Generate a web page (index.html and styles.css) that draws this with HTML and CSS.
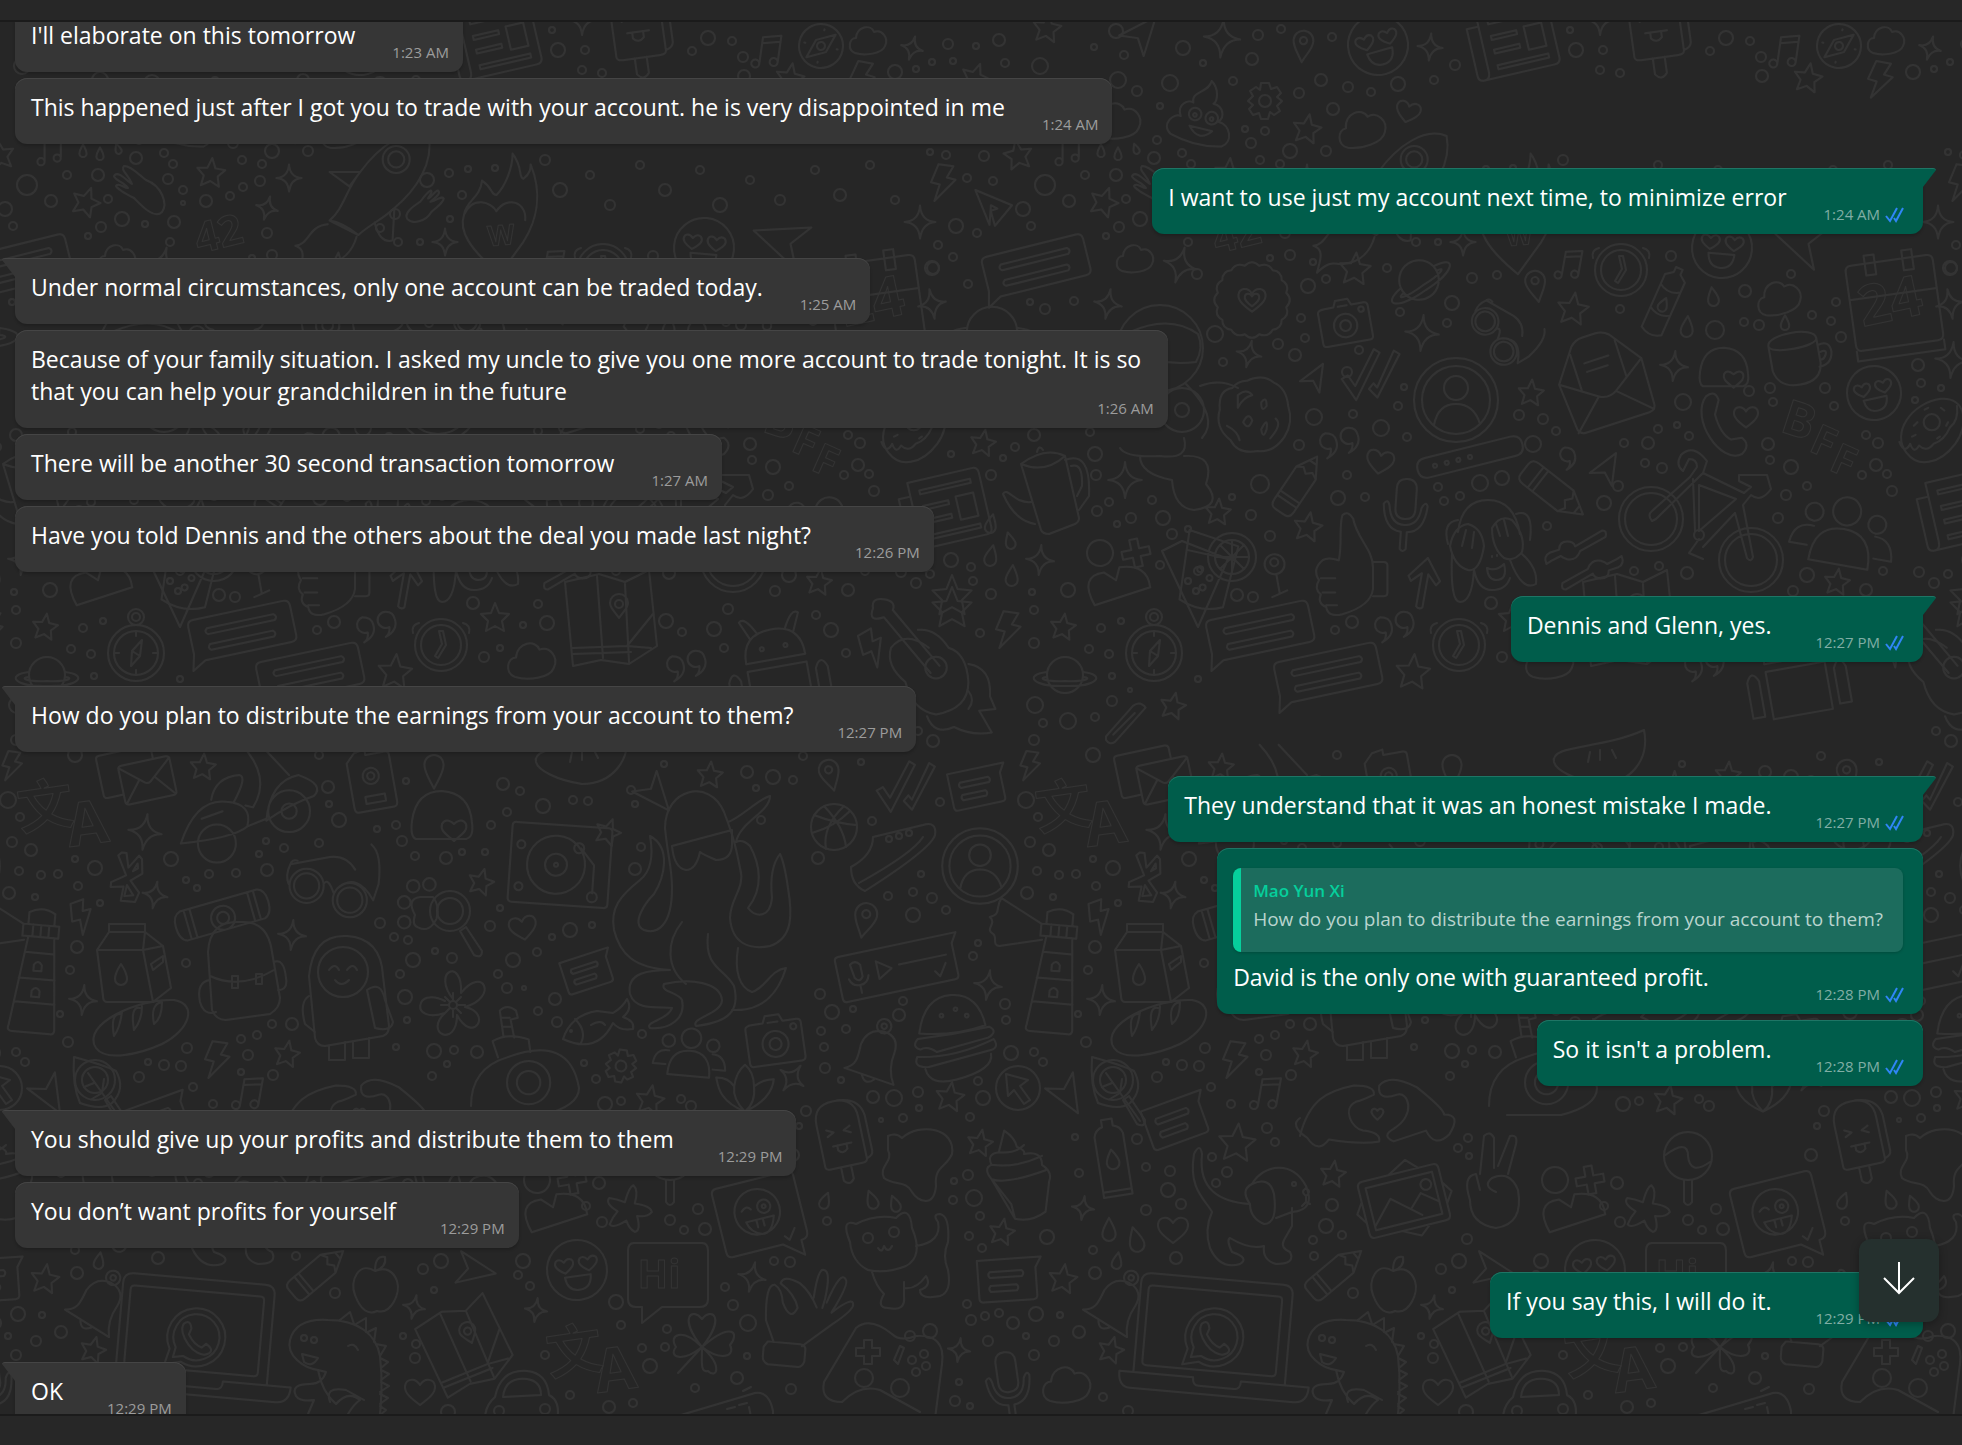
FILE: index.html
```html
<!DOCTYPE html>
<html lang="en">
<head>
    <meta charset="UTF-8">
    <meta name="viewport" content="width=device-width, initial-scale=1.0">
    <title>Chat</title>
    <link rel="stylesheet" href="styles.css">
</head>
<body>
    <svg class="sprite" aria-hidden="true">
        <symbol id="ticks" viewBox="0 0 20 16">
            <path d="M1 9l4 5L12 1M9 11l2 3L18 1" />
        </symbol>
    </svg>

    <header class="top-bar"></header>

    <main class="chat">
        <svg class="wallpaper" aria-hidden="true">
            <defs>
                <pattern id="tile" y="-22" width="1018" height="1445" patternUnits="userSpaceOnUse">
                    <g id="doodles"></g>
                    <use href="#doodles" x="1018" />
                    <use href="#doodles" x="-1018" />
                </pattern>
            </defs>
            <rect width="100%" height="100%" fill="url(#tile)" />
        </svg>

        <div class="messages">
            <div class="message in">
                <p class="text">I'll elaborate on this tomorrow</p>
                <span class="time short">1:23 AM</span>
            </div>
            <div class="message in">
                <p class="text">This happened just after I got you to trade with your account. he is very disappointed in me</p>
                <span class="time short">1:24 AM</span>
            </div>

            <div class="message out first">
                <p class="text">I want to use just my account next time, to minimize error</p>
                <span class="time short">1:24 AM <svg class="ticks"><use href="#ticks" /></svg></span>
            </div>

            <div class="message in first">
                <p class="text">Under normal circumstances, only one account can be traded today.</p>
                <span class="time short">1:25 AM</span>
            </div>
            <div class="message in">
                <p class="text">Because of your family situation. I asked my uncle to give you one more account to trade tonight. It is so<br>that you can help your grandchildren in the future</p>
                <span class="time under">1:26 AM</span>
            </div>
            <div class="message in">
                <p class="text">There will be another 30 second transaction tomorrow</p>
                <span class="time short">1:27 AM</span>
            </div>
            <div class="message in">
                <p class="text">Have you told Dennis and the others about the deal you made last night?</p>
                <span class="time">12:26 PM</span>
            </div>

            <div class="message out first">
                <p class="text">Dennis and Glenn, yes.</p>
                <span class="time">12:27 PM <svg class="ticks"><use href="#ticks" /></svg></span>
            </div>

            <div class="message in first">
                <p class="text">How do you plan to distribute the earnings from your account to them?</p>
                <span class="time">12:27 PM</span>
            </div>

            <div class="message out first">
                <p class="text">They understand that it was an honest mistake I made.</p>
                <span class="time">12:27 PM <svg class="ticks"><use href="#ticks" /></svg></span>
            </div>
            <div class="message out with-quote">
                <blockquote class="quote">
                    <cite class="quote-name">Mao Yun Xi</cite>
                    <p class="quote-text">How do you plan to distribute the earnings from your account to them?</p>
                </blockquote>
                <p class="text">David is the only one with guaranteed profit.</p>
                <span class="time">12:28 PM <svg class="ticks"><use href="#ticks" /></svg></span>
            </div>
            <div class="message out">
                <p class="text">So it isn't a problem.</p>
                <span class="time">12:28 PM <svg class="ticks"><use href="#ticks" /></svg></span>
            </div>

            <div class="message in first">
                <p class="text">You should give up your profits and distribute them to them</p>
                <span class="time">12:29 PM</span>
            </div>
            <div class="message in">
                <p class="text">You don’t want profits for yourself</p>
                <span class="time">12:29 PM</span>
            </div>

            <div class="message out turn">
                <p class="text">If you say this, I will do it.</p>
                <span class="time">12:29 PM <svg class="ticks"><use href="#ticks" /></svg></span>
            </div>

            <div class="message in first">
                <p class="text">OK</p>
                <span class="time">12:29 PM</span>
            </div>
        </div>

        <button type="button" class="scroll-down" aria-label="Scroll to latest">
            <svg viewBox="0 0 32 34"><path d="M16 1v31M1 17l15 15 15-15" /></svg>
        </button>
    </main>

    <footer class="bottom-bar"></footer>

    <script src="wallpaper.js"></script>
</body>
</html>
```

FILE: styles.css
```css
* {
    box-sizing: border-box;
}

body {
    display: flex;
    flex-direction: column;
    height: 100vh;
    margin: 0;
    background-color: #272727;
    color: #fff;
    font-family: "Open Sans", "Noto Sans", sans-serif;
    font-size: 23px;
    line-height: 32px;
}

p {
    margin: 0;
}

.sprite {
    position: absolute;
    width: 0;
    height: 0;
}

.top-bar {
    height: 22px;
    flex-shrink: 0;
    border-bottom: 2px solid #1b1b1b;
}

.bottom-bar {
    height: 31px;
    flex-shrink: 0;
    border-top: 2px solid #1b1b1b;
}

/* Chat area */
.chat {
    position: relative;
    flex: 1;
    min-height: 0;
    overflow: hidden;
    background-color: #262626;
}

.wallpaper {
    position: absolute;
    inset: 0;
    width: 100%;
    height: 100%;
}

#doodles {
    fill: none;
    stroke: #333;
    stroke-width: 2;
    stroke-linecap: round;
    stroke-linejoin: round;
}

#doodles text {
    font-family: "Open Sans", "Noto Sans CJK SC", sans-serif;
    font-weight: bold;
    stroke-width: 1;
    text-anchor: middle;
}

/* Scrolled a little, so the first bubble is cut off */
.messages {
    position: relative;
    display: flex;
    flex-direction: column;
    gap: 6px;
    margin-top: -16px;
    padding: 0 39px 0 15px;
}

.message {
    position: relative;
    display: flex;
    align-items: flex-end;
    max-width: 1160px;
    padding: 13px 14px 10px 16px;
    border-radius: 12px;
}

.in {
    align-self: flex-start;
    background-color: #363636;
    box-shadow: inset 0 1px #454545, 0 2px 3px rgba(0, 0, 0, 0.2);
}

.out {
    align-self: flex-end;
    padding-right: 18px;
    background-color: #005d4b;
    box-shadow: inset 0 1px #1f7565, 0 2px 3px rgba(0, 0, 0, 0.2);
}

.first,
.turn {
    margin-top: 18px;
}

.in.first {
    border-top-left-radius: 0;
}

.out.first {
    border-top-right-radius: 0;
}

/* Bubble tails */
.first::before {
    content: "";
    position: absolute;
    top: 0;
    width: 13px;
    height: 18px;
    background-color: inherit;
}

.in.first::before {
    right: 100%;
    border-top: 1px solid #454545;
    border-top-left-radius: 3px;
    clip-path: polygon(0 0, 100% 0, 100% 100%, 0 2px);
}

.out.first::before {
    left: 100%;
    border-top: 1px solid #1f7565;
    border-top-right-radius: 3px;
    clip-path: polygon(0 0, 100% 0, 100% 2px, 0 100%);
}

.text {
    flex-shrink: 0;
    padding-bottom: 11px;
}

.time {
    flex-shrink: 0;
    margin-left: 44px;
    color: #9c9c9c;
    font-size: 15px;
    line-height: 20px;
    white-space: nowrap;
}

.time.short {
    margin-left: 37px;
}

/* The time sits below the end of the longest line */
.time.under {
    margin-left: -44px;
}

.out .time {
    color: #80aea5;
}

.ticks {
    width: 20px;
    height: 16px;
    margin-left: 1px;
    vertical-align: -3px;
    fill: none;
    stroke: #2f86f6;
    stroke-width: 2;
}

/* Quoted message */
.with-quote {
    flex-wrap: wrap;
    justify-content: space-between;
    width: min-content;
    padding-top: 20px;
}

.quote {
    margin: 0 2px 9px 0;
    padding: 10px 20px 18px 12px;
    border-left: 8px solid #06cf9c;
    border-radius: 8px;
    background-color: #1c6c5d;
    box-shadow: 0 1px 3px rgba(0, 0, 0, 0.2);
    white-space: nowrap;
}

.quote-name {
    display: block;
    color: #06cf9c;
    font-size: 17px;
    font-style: normal;
    font-weight: 600;
    line-height: 26px;
}

.quote-text {
    color: #b9d4ce;
    font-size: 19px;
    line-height: 30px;
}

.scroll-down {
    position: absolute;
    right: 23px;
    bottom: 92px;
    display: flex;
    align-items: center;
    justify-content: center;
    width: 80px;
    height: 83px;
    padding: 0 0 6px;
    border: none;
    border-radius: 12px;
    background-color: #25302e;
    box-shadow: 0 2px 8px rgba(0, 0, 0, 0.3);
}

.scroll-down svg {
    width: 32px;
    height: 34px;
    fill: none;
    stroke: #fff;
    stroke-width: 2;
}
```

FILE: wallpaper.js
```js
// Circle as a path, so that every doodle is a single path
function c(x, y, r) {
    return "M" + (x - r) + " " + y + "a" + r + " " + r + " 0 1 0 " + 2 * r + " 0a" + r + " " + r + " 0 1 0 " + -2 * r + " 0z";
}

var heart = "M0 13C-8 7-16 1-15-6C-14-13-5-15 0-7C5-15 14-13 15-6C16 1 8 7 0 13z";
var smallHeart = "M0 7C-5 3-9 0-8-4C-7-8-2-8 0-4C2-8 7-8 8-4C9 0 5 3 0 7z";

// Every shape is drawn round 0,0
var shapes = {
    star: "M0-15L4-5L14-4L7 3L9 13L0 8L-9 13L-7 3L-14-4L-4-5z",
    sparkle: "M0-15Q1-1 14 0Q2 1 0 15Q-1 1-14 0Q-1-1 0-15z",
    heart: heart,
    drop: "M0-11C3-5 6-1 6 4A6 6 0 0 1-6 4C-6-1-3-5 0-11z",
    bolt: "M-7-18L8-18L3-6L12-5L-6 19L-3 2L-12 1z",
    cloud: "M-14 13C-22 10-20-2-13-2C-12-14 2-16 5-8C13-11 20-2 16 6C13 14-4 16-14 13z",
    pin: "M0 18C-5 8-11 2-11-6A11 11 0 0 1 11-6C11 2 5 8 0 18z" + c(0, -6, 4),
    notes: "M-6 12V-14L12-18V8M-6-8L12-12" + c(-10, 13, 4) + c(8, 9, 4),
    send: "M-18-16L20 0L-18 16L-8 0z",
    plane: "M-20-14L24-12L14 16L4 2L10-3L2-4L8 17z",
    plus: "M-4-14H4V-4H14V4H4V14H-4V4H-14V-4H-4z",
    bluetooth: "M-8-30L-2-30L2-12L14-28L18-24L20-6L6 4L18 18L14 30L-4 30L-2 12L-18 14L-18 8L0-2L-12-26zM8-8L14-12L13-18zM2 10L0 24L11 22z",
    clock: c(0, 0, 26) + c(0, 0, 20) + "M-2-14L1-1L-6 11L-3 13L5 0L2-14zM-22-22Q-30-20-28-12M22-22Q30-20 28-12",
    compass: c(0, 0, 28) + c(0, 0, 22) + c(0, -36, 8) + c(0, -36, 4) + "M-5 13L-4-2L6-13L4 3zM-4-2L4 3M0-22V-17M0 22V17M-22 0H-17M22 0H17",
    dial: c(0, 0, 22) + c(0, 0, 4) + "M-12 14L-6-5L12-14L6 5zM0-17V-16M0 17V16M-17 0H-16M17 0H16",
    planet: c(0, 0, 18) + "M-18-3C-42 0-32 12 0 11C32 12 42 0 18-3M-18 2C-28 3-20 7 0 6C20 7 28 3 18 2",
    camera: "M-20-18H-10L-7-25H7L10-18H24Q28-18 28-14V20Q28 24 24 24H-24Q-28 24-28 20V-14Q-28-18-20-18z" + c(0, 4, 13) + c(0, 4, 6) + c(20, -11, 3) + "M-5-18H5",
    badge: "M-8-38Q0-46 8-38Q18-42 23-33Q33-32 33-22Q42-17 38-8Q46 0 38 8Q42 17 33 22Q33 32 23 33Q18 42 8 38Q0 46-8 38Q-18 42-23 33Q-33 32-33 22Q-42 17-38 8Q-46 0-38-8Q-42-17-33-22Q-33-32-23-33Q-18-42-8-38z" + heart + smallHeart,
    chat: "M-46-20H46Q52-20 52-14V16Q52 22 46 22H-42L-56 30L-52 14V-14Q-52-20-46-20zM-34-9H34Q38-6 34-3H-34Q-38-6-34-9zM-34 7H30Q34 10 30 13H-34Q-38 10-34 7z",
    note: "M-28-18H36L30-8V20Q30 24 26 24H-24Q-28 24-28 20zM-16-6H16Q19-3 16 0H-16Q-19-3-16-6zM-16 8H10Q13 11 10 14H-16Q-19 11-16 8z",
    ticks: "M-28 6L-22 2L-14 12L2-26L8-23L-12 26zM0 14L4 8L8 12L22-26L28-23L9 22z",
    quotes: "M-14-12A9 9 0 1 0-8 5Q-7 12-12 16Q2 8-2-4Q-4-12-14-12zM12-18A9 9 0 1 0 16-1Q17 6 12 10Q26 2 22-10Q20-18 12-18z",
    quote: "M0-12A9 9 0 1 0 6 5Q7 12 2 16Q16 8 12-4Q10-12 0-12z",
    newspaper: "M-36-34H30Q36-34 36-28V28Q36 34 30 34H-42Q-48 34-48 28V-20H-36M-36-34V26Q-36 34-42 34M-26-24H26V-20H-26zM-26-8H0V-4H-26zM-26 6H0V10H-26zM8-10H26V14H8zM-26 22H26V26H-26z",
    popsicle: "M-24 30V-20Q-24-44 0-44Q26-44 26-20V30Q26 34 20 34H-18Q-24 34-24 30zM26 30Q34 28 34 22V-20Q32-42 6-44M-6 34V50Q0 58 6 50V34M-14-12L-6-8L-14-4M14-12L6-8L14-4M-10 8H12M-5 8V14Q0 20 6 14V8",
    poop: "M-30 28C-44 20-32 4-24 6C-32-6-20-14-14-12C-20-24 0-26 0-40C10-34 12-20 8-16C20-16 24-4 18 2C32 2 40 20 28 28Q0 36-30 28zM-12 14H14Q2 30-12 14z" + c(-9, 0, 7) + c(10, 0, 7) + c(-9, 1, 2) + c(10, 1, 2),
    gear: "M-4-18H4L6-12L12-14L16-8L12-4L17 0L12 5L15 10L9 14L5 11L3 18H-4L-6 12L-12 14L-16 8L-12 4L-17 0L-12-5L-15-10L-9-14L-5-11z" + c(0, 0, 6),
    smiley: c(0, 0, 30) + "M-13 6H13Q12 20 0 20Q-12 20-13 6zM-12 2C-20-3-23-7-20-11Q-16-14-12-9Q-8-14-4-11C-1-7-4-3-12 2zM12 2C4-3 1-7 4-11Q8-14 12-9Q16-14 20-11C23-7 20-3 12 2z",
    glove: "M-28-14C-24-20-16-10-10-6C-14-16-22-20-18-24C-10-24-2-14 4-10C20-4 26 14 20 22C12 30-2 14-8 8C-16 4-24 0-26-4C-24-8-18-2-14-2C-18-8-28-10-28-14z",
    rocket: "M-36 34C-20 20-18 0-2-20C20-50 50-70 74-60C80-30 60 0 36 20C24 32 6 40-4 50zM-36 34Q-22 36-4 50M-2-20H-36L-14-4zM36 20L34 56Q20 60 14 36M-38 38C-60 40-58 60-74 62C-60 66-68 82-70 92C-54 76-50 84-40 82C-20 80-10 66-6 52" + c(38, -34, 15) + c(38, -34, 9),
    flame: "M0 58C-34 30-46 10-40-8C-38-24-22-26-20-46C-8-38-10-30-4-30C6-40 14-60 14-76C26-60 20-50 26-48C34-54 34-60 34-64C48-30 40 0 26 22L0 58zM-40-8C-30-30-10-22-4-12C8-30 30-22 28-2",
    crayon: "M-12-30L-4-36V-42H4V-36L12-30V34Q0 42-12 34zM-12-18Q0-10 12-18M-12 10Q0 18 12 10M0-6C3-1 5 2 5 5A5 5 0 0 1-5 5C-5 2-3-1 0-6z",
    pencil: "M0-38L13-16V28Q13 36 6 36H-6Q-13 36-13 28V-16zM-13-16L-6-20L0-15L6-20L13-16M-13 16H13M-13 22H13M-4-30H4",
    calendar: "M-38-40H38Q44-40 44-34V40Q44 46 38 46H-38Q-44 46-44 40V-34Q-44-40-38-40zM-44 46V56H44V46M-24-48H-14V-28H-24zM14-48H24V-28H14zM-44-6H44",
    mug: "M-28-18C-28-32 26-32 26-18C26-8-28-8-28-18V10Q-24 30 0 30Q24 30 26 10V-18M26-10Q40-14 40 0Q38 14 24 14M28-2Q36-4 33 2Q30 8 26 6",
    glasses: "M-44-22L0-30Q18-32 28-16M-44-22Q-50-10-46 0M46-44Q58-34 54 0L48 18" + c(-26, 2, 19) + c(-26, 2, 14) + c(22, 18, 19) + c(22, 18, 14) + "M-7 0Q-2-8 4 10M-44-22Q-42-28-36-26M8 5Q30-14 48 18",
    envelopeOpen: "M-48-10L-44 44Q-42 50-36 50H38Q46 50 46 42L48-10L22-46Q16-52 8-52H-8Q-16-52-22-46zM-48-10L-10 16Q0 22 10 16L48-10M-44 48L-10 16M44 48L10 16M-26 4V-38M26 4V-38M-14-24H14M-14-14H10",
    envelopes: "M-38-30H16Q20-30 20-26V-14M-38-30Q-42-30-42-26V14Q-42 18-38 18H-20M-16-14H34Q38-14 38-10V26Q38 30 34 30H-16Q-20 30-20 26V-10Q-20-14-16-14zM-20-12L6 10Q9 12 12 10L38-12M-18 28L0 6M36 28L18 6",
    avatar: c(0, 0, 42) + c(0, 0, 34) + "M-22 25Q-18 4 0 4Q18 4 24 24" + c(0, -12, 12),
    helmet: "M-26 24Q-32 22-30 6Q-26-24 0-24Q28-22 30 8Q32 22 24 24zM12 26C4 19-2 16 0 9Q4 2 12 9Q20 2 24 9C26 16 20 19 12 26z",
    phone: "M-20-34Q-10-42-6-30L-10-14Q-4 8 8 14L20 12Q30 20 20 30C-4 42-38-10-20-34z",
    donut: "M-26 22C-44 0-20-34 12-38C40-40 44-10 28 12C10 36-14 38-26 22zM-34 10Q-28 24-22 12Q-18 24-12 14Q-4 22 4 12Q16 8 22-6Q32-14 30-30" + c(2, -12, 9) + "M-18-8L-14-12M-20 4L-16 2M-6-26L-2-28M12-28L16-25M18-8L20-12M8 6L11 4",
    cookie: "M-8-38Q10-46 22-36Q36-30 38-10Q44 8 34 24Q22 42 4 40Q-18 44-26 28Q-44 14-38-6Q-40-28-24-30Q-18-38-8-38zM-18-22Q-8-30-2-22Q-12-20-18-8zM8-14Q14-22 14-10Q8-2 8-14zM-12 8Q-6-4-2 6Q-6 18-12 8zM8 16Q16 0 14 16Q10 28 8 16zM24 4Q32 10 18 26M-30 12Q-18 18-16 28" ,
    pill: "M-44-10H44Q54-10 54 0Q54 10 44 10H-44Q-54 10-54 0Q-54-10-44-10z" + c(-36, 0, 2) + c(-24, 0, 2) + c(-12, 0, 2) + c(0, 0, 2),
    mic: "M0-36Q10-36 10-26V-6Q10 4 0 4Q-10 4-10-6V-26Q-10-36 0-36zM-22-10Q-18-16-16-8Q-14 10 0 10Q14 10 16-8Q20-16 22-10Q20 16 3 17V34Q0 38-3 34V17Q-20 16-22-10z",
    monkey: "M-30-16Q-26-48 0-48Q26-48 32-14M-30-28Q-46-26-40-4M28-34Q46-40 42-8M-38-2Q-34-22-20-24Q-6-20-4-2Q-8 24-20 22Q-34 18-38-2zM-26-2L-22-18M-16 0L-14-16M4-20Q12-34 24-28Q38-12 34 4Q26 14 16 10Q4 0 4-20zM12-12L8-24M20-12L16-28M-14 22Q-10 42 4 42Q18 42 22 30M-1 20Q8 24 16 16Q20 32 8 32Q0 32-1 20zM-36 6Q-38 54-28 54Q-16 54-14 22M34 6Q50 20 48 36Q34 44 22 12M4 8V9M9 7V8",
    bike: c(-50, 6, 32) + c(-50, 6, 26) + c(50, 47, 32) + c(50, 47, 26) + "M-49 8Q-54 2-49-2L-11-36L-4-46Q-4-54-12-54L-18-42Q-26-48-20-58Q-8-70 6-52L2-40L-45 6zM2-40L43-20L50-26L38-32V-38H66L70-24Q60-10 50-18L42-8L52 44Q50 50 46 45L34 0L2 34M-2-28L35-14L-2 18zM-8-34L-6 18M-2 26L-12 40L2 46" + c(-2, 22, 5),
    thumb: "M-8-2C-4-20-8-40-4-52Q2-58 8-48C12-26 30-14 30 6V30C28 46 10 54-4 58Q-20 62-22 50Q-32 46-28 36Q-36 30-30 20Q-38 8-26-2Q-20-6-8-2zM-28 18H-12M-26 34H-12M-22 48H-10M30 0H42Q46 0 46 4V34Q46 38 42 38H30",
    goblet: c(0, -14, 10) + c(0, -16, 4) + "M0-4V16M-8 18L8 14",
    arrow: "M-4 34V-8L-16 4L-20-2L0-28L20-2L16 4L4-8V34Q0 38-4 34z",
    wrench: "M-42 20Q-46 10-38 6L-26 2Q-26-8-16-8Q-8-8-6-2L28-22Q34-22 32-14L0 4Q-4 16-16 14Q-22 12-24 10L-36 16z",
    people: c(0, -24, 14) + c(-32, -18, 9) + c(32, -16, 9) + "M-30 30Q-30-6 0-6Q30-6 30 30zM-34 16H-52Q-50-6-30-4M34 18H52Q50-4 32-4",
    lemon: c(0, 0, 24) + c(0, 0, 17) + "M0-17V17M-17 0H17M-12-12L12 12M12-12L-12 12M-50-16L-4 2L-34 70L-70-6z" + c(-34, 14, 4) + c(-44, 24, 3) + c(-36, 34, 3),
    glass: "M-24-40L26-28L16 34Q-6 42-28 30zM-25-20L22-14" + c(-10, -2, 3) + c(0, 6, 3) + c(-6, 16, 3),
    teapot: "M-24-26Q0-44 20-34L34 28Q34 32 30 34L4 44Q-2 44-4 40zM-24-26Q0-16 20-34M-8-38Q-6-46-2-40M-14 12C-30 14-38-4-42 4C-34 22-24 32-10 34M20-30Q46-40 44 6L34 20M26-24Q38-28 37-4L32 6",
    astronaut: c(0, 0, 43) + "M-30-16Q10-34 38-14Q44 0 36 14Q0 18-30 4zM26 36Q60 70 42 90M40 38Q60 30 78 40M-40 100Q-34 110 0 108Q30 112 24 90M-20 108Q-20 126 12 132Q14 160 34 162Q64 158 46 136Q56 106 24 108" + c(22, 62, 22) + c(22, 62, 7),
    pear: c(0, 0, 13) + "M-16 50Q-26 18 0 20L10 30L16 18Q44 20 42 44z",
    map: "M-42-40L-8-48L18-40L42-52L50 24L22 42L-6 38L-34 44zM-34 26L20 24L46-8M-34 32L24 30M20 24L44 26M-10-46L-4 36M18-38L22 40" + c(12, -18, 4) + "M12-4C8-10 3-14 3-19A9 9 0 0 1 21-19C21-14 16-10 12-4z",
    android: "M-30 4Q-30-26 0-26Q30-26 30 4zM-22-20L-30-38Q-24-44-14-24M22-20L30-38Q24-44 14-24M-30 12H30V60H-30zM-50 20Q-44 6-38 20V56H-50zM38 20Q44 6 50 20V56H38z" + c(-12, -8, 2) + c(12, -8, 2),
    guitar: "M-8-8Q-34-28-50-8Q-56 12-34 30Q-26 62 0 66Q36 60 36 30Q34-2 14-8Q0-30-20-28M-6 20L-58-42M4 12L-48-50M-58-42Q-76-36-70-52Q-72-64-58-62Q-44-60-48-50M36 10Q62 14 60 46L66 60L48 62L62 86Q40 90 20 80Q-2 90-10 68M36 40Q44 50 36 60" + c(0, 14, 12),
    clip: "M-20 16L10-18Q18-24 24-16L-10 22Q-16 26-20 20zM-12 14L12-10",
    scooter: "M-56 30Q-40-18-8-14Q20-12 14 12Q0 24-56 30zM-24-16Q-20-40 6-42Q14-40 0-14M8-74Q40-40 20-8L12-10M28-74L58-42M14 12L34 4M34 6Q38-36 68-42Q96-32 84-20Q60-12 34 6z" + c(-18, 30, 20) + c(58, -4, 22) + c(58, -4, 8) + "M-34 4L-12-4",
    card: "M-20-30L-14-36L-2-38V-32H20Q24-32 24-28V24Q24 30 20 30H-20Q-24 30-24 24V-26zM-10 14H12V22H-10z" + c(0, -8, 9) + c(0, -8, 4),
    bean: "M-46-8C-50-26 0-20 44-40C50-10 30 14 0 14C-26 10-44 0-46-8zM-10-18L-12-8M0-20V-10M12-20L16-12",
    paw: "M-10 10Q-20-8-4-10H10Q18 0 14 14Q6 30-6 24Q-14 22-10 10z" + c(-22, -4, 7) + c(-12, -22, 7) + c(6, -24, 7) + c(-22, 18, 7),
    magnifier: c(0, -6, 20) + c(0, -6, 13) + "M10 14L16 10L32 34Q32 42 24 38z",
    recorder: "M-46-40H46Q50-40 50-36V36Q50 40 46 40H-46Q-50 40-50 36V-36Q-50-40-46-40zM20-18L34-2V26" + c(-4, 0, 29) + c(-4, 0, 11) + c(-4, 0, 2) + c(18, -18, 5) + c(34, 30, 5) + c(-40, 24, 4) + c(-40, -18, 4),
    cylinder: "M-40-14H40Q48-12 48 0Q48 14 40 16H-40Q-48 14-48 0Q-48-12-40-14zM-36-14V16M-30-14V16M30-14V16M36-14V16" + c(0, 4, 12) + c(0, 4, 6),
    lighthouse: "M-12-38H14L22 54Q22 58 18 58H-20Q-26 58-24 52zM-18-50H18V-38H-18zM-13-50V-62Q0-70 13-62V-50M-8-50V-38M0-50V-38M8-50V-38M-14-22H15M-18 4H18M-20 28H20M-4-4V-10Q0-16 4-10V-4zM-4 22V16Q0 10 4 16V22zM-18-50L-60-72C-66-62-58-56-70-52C-62-46-74-40-66-36C-60-34-66-24-58-24L-16-34",
    milk: "M-36-10L-24-28H12L30-14L38 28L20 42H-26Q-30 42-30 36zM-36-10H10L30-14M10-10L20 42M12-28L10-10M-24-28V-36H12V-28M-12 4C-8 10-6 14-6 19A6 6 0 0 1-18 19C-18 14-16 10-12 4zM18 4L30-4V2L20 10z",
    backpack: "M-32-20Q-30-52 0-50Q28-52 32-20L40 26Q40 36 30 42L-14 48Q-24 48-28 38zM-30 4Q0 18 34-2M-8 4V16H-2V4zM16 2V12H22V2zM-30 8Q-44 10-40 30Q-36 44-24 40M34-10Q44-14 46 6Q48 18 38 18",
    suit: "M-38-20Q-34-62 0-60Q34-58 36-20L42 30Q42 38 36 40L-22 50Q-30 50-32 42zM-18 50V64H-2V46M6 46V62H22V42M-38 0Q-48 6-42 28L-32 36M20-6Q34-16 38 4L46 26Q44 36 28 32z" + c(-4, -24, 25) + "M-18-26Q-12-34-8-26M0-26Q6-34 10-26M-12-16Q-6-8 2-16",
    flower: "M0-6C-22-34 10-48 8-12C30-40 46-8 12 2C40 8 20 40 4 10C4 44-30 28-8 8C-44 20-38-20-8-4" + c(0, 0, 4) + "M0-5V-12M5 0H12M0 5V12M-5 0H-12M4-4L8-8M-4-4L-8-8M4 4L8 8M-4 4L-8 8",
    bread: "M-44 20C-60-4 0-30 34-28C58-24 50 2 22 16C0 26-34 34-44 20zM-26 8Q-30-14-20-14M-26 8Q-20 0-18-16M-6 2Q-10-22 0-20M-6 2Q2-8 2-22M14-4Q10-24 22-26M14-4Q22-10 22-26",
    fish: "M-34 14Q-26-10 0-14L16-12Q26-18 30-26Q36-16 26-8Q38-4 36 4Q22 6 16-2Q0 30-34 14zM-22-6Q-10 6-16 18M-6 0Q4-6 8 0" + c(-26, 6, 1),
    leaf: "M-24-28Q6-20 18-14Q28 4 14 18Q4 26-18 18Q-26 0-24-28zM-10-12L24 36M-4-2L-14 2M4 8L-6 14M4 8L6-6",
    rotary: "M-60 40Q-60-2-20-14Q50-40 60 20Q60 40 20 50H-40M-30-14L-36-32Q-20-42 4-34L6-20M-24-38L-28-66Q-20-74-10-66L-8-58L-16-56L-12-36M-26-58H-17M-25-48H-16" + c(4, 14, 24) + c(4, 14, 13),
    octopus: "M-45-60C-45-100 0-110 14-76C24-50 26-40 30-20C36 0 20 10 20 30C22 56 40 62 60 58C84 50 82 24 78 0C76-14 74-26 70-34C62-24 60-10 62 10C60 30 46 30 38 20C54 0 50-24 40-42C34-48 30-48 26-46C30-66 60-76 60-92C50-90 30-70 18-66M-45-60C-42-30-38-20-38 0C-38 40-54 46-66 42C-80 36-64 14-56 6C-46-10-38-40-60-52C-56-30-60-16-70-8C-90 8-100 20-96 42C-90 66-76 80-40 82C-60 82-84 84-80 106C-74 124-50 118-38 120C-42 132-66 134-60 140C-40 142-24 130-28 112C-32 104-50 104-46 96C-20 90 10 94 12 112C12 126-20 130-14 138C20 134 30 122 24 98C14 80-6 80-2 46M-28 34C-44 54-44 80-24 96M28 60C24 84 30 100 42 104C56 100 60 82 76 80C70 100 56 124 22 122M-38-42L22-58V-44Q22-28 6-28Q-8-34-10-36Q-14-18-24-18Q-36-20-38-42z",
    ball: c(0, 0, 23) + "M-20-12Q0-4 22-2M-22 6Q0 0 16-16M-10-21Q10 0 12 20M10-21Q-12 0-8 22",
    shoe: "M-42 10Q-20-2-20-20L30-32Q44-36 42-22Q38-8-28 34Q-42 28-42 10zM-34 26Q20-4 30-20" + c(-4, -18, 3) + c(6, -21, 3) + c(16, -24, 3),
    voice: "M-56-20H64L58-10V22Q58 26 54 26H-56Q-60 26-60 22V-16Q-60-20-56-20zM-46-10Q-40-14-36-8V4Q-40 10-44 4zM-50 4Q-48 12-40 12Q-32 12-30 4M-40 12V20M-20-8L-6 2L-20 10zM2 0H50M36 14L40 20L48 8",
    burger: "M-38-10Q-30-50 0-50Q30-50 36-14Q0-4-38-10zM-40-4Q0-6 40-12Q50-6 38 0L-20 12Q-30 4-38 8Q-48 4-40-4zM-42 16Q0 20 44 2Q50 12 40 14L-30 28Q-48 28-42 16zM-34 30Q-30 50 0 44Q42 36 40 18" + c(-12, -28, 2) + c(4, -34, 2) + c(16, -26, 2),
    bell: "M-34 14C-20 10-20 0-18-14Q-12-32 6-30Q24-26 20-8Q14 12 22 28zM-14 20Q-10 32 0 24" + c(6, -36, 8) + c(6, -36, 3),
    lotus: "M0 24C-30 12-30-6-32-14Q-18-14-12-4Q-10-20 0-28Q10-20 10-4Q20-12 32-12Q30 10 0 24zM-12-4Q-14 10 0 24M10-4Q12 14 0 24",
    pointer: c(0, 0, 22) + "M-12-14L10-8L2-2L12 12L6 16L-4 2L-10 8z",
    blob: "M-32-26Q-24-30-18-24C0-40 36-34 32-8C26 6 14 4 16 24C14 46-2 40-8 30C-14 18-26 24-36 16C-42 4-26 0-32-12z",
    cupcake: "M-26 8Q-36-4-26-8Q-32-20-18-22L-12-46Q0-38 2-28Q12-24 10-20Q30-24 30-8Q42 0 38 10L34 44Q18 56 0 52zM-26 8Q-10 14 34-2M-26-8Q0-4 30-18M-18-22Q0-20 10-30M-26 8L-4 36L0 52",
    bottle: "M-16-30Q-14-38-6-40V-48H6V-40Q14-38 16-30V38H-16zM-16 32H16M0-14C4-8 7-4 7 1A7 7 0 0 1-7 1C-7-4-4-8 0-14z",
    face: "M-38-38H38Q44-38 44-32V28Q44 36 36 36V52L16 36H-38Q-44 36-44 30V-32Q-44-38-38-38z" + c(-2, -4, 24) + c(6, -8, 7) + c(6, -8, 2) + "M-18-8Q-12-14-8-8M-16 4H14Q8 22-2 20Q-14 16-16 4zM-5 5V12M2 5V12M20 28L24 33L32 22",
    cat: "M-46-20Q-56-44-40-38Q-20-48 0-44Q14-58 16-34Q28-6 10 4Q-10 12-28 8Q-44 0-46-20zM-24 10Q-20 24-12 32Q-20 46-8 46Q10 50 8 34V20M8 26Q20 28 30 14Q36 24 24 28Q24 38 44 34Q56 30 52 8Q46-6 52-20Q54-46 44-48Q36-48 42-40Q46-20 20-16" + c(-28, -24, 5) + c(-2, -30, 5) + "M-18-14Q-14-8-12-16Q-8-8-4-16",
    ok: "M-40-10Q-44-48-34-48Q-26-44-24-30Q-14-10-8-26Q-12-40-28-50Q-26-60-8-52Q4-44 12-28M8-38Q10-70 16-68Q24-68 20-38L18-28M22-34Q34-70 40-60Q44-56 28-24M28-24Q50-44 50-34Q50-28 30-12L0 14M-40-10L-30 12M-36 12H-2Q4 12 4 18V30Q2 36-2 36H-34Q-40 34-40 28V18z",
    gamepad: "M-56 20L-24-34Q-10-46 12-28Q20-20 36-26Q66-28 62 2L52 80M-56 20Q-60 40-38 40Q-20 22 0 28L40 50M-24-14H-16V-22H-8V-14H0V-6H-8V2H-16V-6H-24zM14-2L20-16L24-14L18 2z" + c(-16, 16, 9) + c(20, 26, 9) + c(32, -2, 4) + c(44, -8, 4) + c(46, 4, 4) + c(36, 10, 4),
    clover: "M0 0C-24-30-10-40 0-28C10-40 24-30 0 0C30-26 38-14 28-2C34 10 18 14 0 0C22 20 14 32 6 24C-2 26 0 14 0 0L-24 26M0 0C-20 16-34 10-26 0C-34-12-20-20 0 0",
    hi: "M-34-32H34Q40-32 40-24V24Q40 32 32 32H-6L-26 48V32H-32Q-40 32-40 24V-24Q-40-32-34-32z",
    starfish: "M0-24Q6-20 4-6Q20-6 22 0Q18 6 8 6Q14 20 8 22Q2 20-2 12Q-14 22-18 18Q-16 10-12 4Q-26-2-22-8Q-14-8-6-6Q-4-22 0-24z",
    lollipop: c(0, -16, 24) + "M-4 8V30Q0 36 4 30V8M-24-16Q0-34 0-16Q2 4 22-10",
    hands: "M-70 20C-60-20-40-30-10-36Q14-36 12-26Q0-20-8-18C-24-10-12 12 0 14Q20 16 18 26Q0 30-38 24Q-50 40-62 22Q-82 8-70 0M60-34Q90-10 90-4Q110-4 96 18Q80 34 70 14Q40 24 34 26Q20 20 34 12C60-4 50-30 38-26Q16-18 18-36Q30-50 60-34" + "M16 2C10-3 8-6 10-9Q13-12 16-8Q19-12 22-9C24-6 22-3 16 2z",
    dog: "M-46-46Q-40-58-38-46C-42-10-20 2 10 4M-46-46C-52-10-34 0-28 12Q-36 30-30 48Q-20 70 0 64Q10 58-8 52Q-14 40-10 38Q10 50 24 46Q22 60 36 64Q56 64 50 52Q40 48 44 40L52 26V8M10 4Q0-10 12-16Q30-24 34-6Q38 24 24 24Q10 18 10 4zM12-16C24-36 52-40 66-14Q76 10 52 12L36 18" + c(54, -16, 2) + "M66-12Q72-8 66-4Q60-8 66-12M66-4V2M62 6L66 2L70 4",
    picture: "M-40-32H40Q46-32 46-26V26Q46 32 40 32H-40Q-46 32-46 26V-26Q-46-32-40-32zM-38-24H38V24H-38zM-38 20L-14-6L16 20M6 10L20-4L38 10M-10-32L12-44L24-32M-10 32L10 42L22 32M46-10L54 2L46 14M-46-10L-54 2L-46 14" + c(28, -12, 6),
    apple: "M0-18C-16-28-26-8-20 6C-14 22-6 26 2 22C16 26 26 4 22-8Q16-24 0-18zM0-18Q0-34 10-32Q12-22 0-18",
    peace: "M-26 20Q-34-4-20-6L-16 10M-16-6L-12-44Q-6-50-2-42V-12M2-14L14-44Q22-46 20-36L12-6M-26 20Q-26 44 0 48Q28 44 22 10Q14-10-4-2Q-14 6 0 12",
    laptop: "M-68-66H64Q74-66 74-56V34M-68-66Q-78-66-78-56V34M-66-54H60Q64-54 64-50V22Q64 26 60 26H-66Q-70 26-70 22V-50Q-70-54-66-54zM-92 34H-18Q-18 42-12 42H24Q30 42 30 34H98Q98 50 84 50H-80Q-92 50-92 34z" + "M-30 22L-26 6A29 29 0 1 1-14 18zM-22 14L-20 4A23 23 0 1 1-12 12zM-14-20Q-8-26-6-16L-8-10Q-2 0 6 2L10-2Q20 4 12 8C0 14-20-10-14-20z",
    dino: "M16 60Q4 56 10 44Q16 34 22 30Q10 20-2 34Q-16 22-20 0C-34-2-52-14-48-30Q-42-52-10-50C20-50 38-36 42-14Q46 20 40 60M2-50L12-58L16-46M18-46L28-52L28-38M30-38L38-42L36-28M38-26L48-24L42-14M42-12L50-8L43-2M43 0L51 4L43 10M43 12L51 16L42 22M42 24L50 28L42 34M42 36L48 40L41 46M-36-16L-20-12Q-26-2-34-8zM-20 0L-12 2Q-16 14-28 14Q-48 14-42 26Q-38 32-24 30L-30 44M-8 32Q-14 16 8 20L26 30M10-24Q16-28 20-20" + c(-34, -32, 3) + c(-24, -30, 3),
    car: "M-26-8Q-20-36 6-34Q26-32 28-10Q40-4 36 16V30H-32Q-42 6-26-8zM-18-8Q-16-28 6-26Q20-24 20-10z" + c(-22, 6, 5) + c(24, 4, 5),
    radio: "M-54 10L20-12Q34-14 38 6V30H-54zM8-14L16-18M-8 4L0 2M4 0L12-2M4 12L10 10M14 2L16 12"
};

// name, x, y, turn, scale
var doodles = [
    ["newspaper", 500, 38, -13, 1], ["popsicle", 636, 24, -8, 1], ["notes", 767, 52, 8, 1], ["dial", 821, 46, 12, 1], ["cloud", 869, 40, 0, 1],
    ["sparkle", 582, 20, 0, 1], ["sparkle", 912, 48, 15, 0.8], ["star", 790, 78, 10, 1], ["bolt", 862, 80, 10, 1], ["star", 975, 78, 20, 1],
    ["star", 29, 28, 8, 1], ["send", 125, 32, -50, 1], ["sparkle", 204, 38, 5, 1.3], ["pin", 285, 46, 5, 0.9], ["smiley", 360, 45, -16, 1],
    ["sparkle", 412, 47, 5, 0.9], ["poop", 185, 116, 14, 0.9], ["gear", 247, 101, 0, 1], ["star", 289, 129, 10, 1], ["heart", 390, 112, 14, 0.8],
    ["cloud", 345, 128, -10, 1.3], ["cloud", 100, 120, 0, 1.3], ["notes", 50, 150, 0, 0.9], ["star", 211, 173, 5, 1], ["star", 86, 202, 20, 1],
    ["glove", 142, 190, 0, 1], ["rocket", 362, 190, 0, 0.9], ["sparkle", 289, 178, 0, 0.9], ["sparkle", 267, 208, 15, 0.8], ["flame", 500, 222, 0, 0.9],
    ["glove", 425, 208, 100, 0.7], ["sparkle", 445, 242, 0, 0.9], ["cloud", 118, 258, 0, 1], ["chat", 18, 265, -14, 1], ["sparkle", 162, 265, 15, 1.2],
    ["sparkle", 90, 304, 10, 1], ["sparkle", 932, 304, -10, 1], ["sparkle", 920, 222, 0, 1.1], ["bolt", 943, 183, 8, 1], ["plane", 988, 208, 20, 0.9],
    ["star", 1018, 155, -10, 1], ["drop", 83, 151, 0, 0.6], ["drop", 100, 154, 0, 0.6], ["drop", 118, 149, -20, 0.5], ["planet", 992, 332, 0, 1.4],
    ["astronaut", 142, 348, 0, 1], ["teapot", 27, 490, 0, 1], ["newspaper", 950, 508, -13, 1], ["star", 983, 443, 10, 0.9], ["sparkle", 107, 480, 0, 1.2],
    ["sparkle", 22, 560, 5, 1], ["drop", 991, 524, 12, 0.9], ["drop", 1010, 541, -15, 0.8], ["drop", 991, 556, 12, 1], ["drop", 1012, 576, 5, 1],
    ["star", 952, 596, 0, 1.4], ["pear", 82, 553, -12, 1], ["plus", 118, 553, -12, 1], ["glass", 192, 572, 5, 1],
    ["badge", 234, 300, 0, 0.9], ["star", 337, 269, 5, 1.1], ["planet", 401, 280, -34, 1.1], ["camera", 327, 322, -10, 0.9], ["sparkle", 404, 333, 5, 1.2],
    ["sparkle", 231, 354, 12, 0.9], ["pin", 518, 286, -10, 0.9], ["notes", 551, 265, 10, 0.9], ["star", 555, 309, 8, 1.1], ["clock", 603, 270, 0, 1],
    ["crayon", 646, 303, 24, 0.9], ["drop", 695, 297, -8, 0.9], ["drop", 669, 327, 5, 1], ["drop", 767, 323, 0, 0.7], ["cloud", 762, 297, -10, 1.2],
    ["calendar", 876, 300, -8, 1], ["mug", 778, 358, -10, 0.9], ["smiley", 704, 248, 5, 1], ["smiley", 856, 393, -12, 0.9], ["glasses", 482, 332, 40, 0.7],
    ["send", 780, 240, 200, 1.4], ["envelopeOpen", 585, 380, -18, 0.9], ["avatar", 438, 400, 0, 1], ["star", 513, 393, 5, 0.9], ["sparkle", 656, 366, 5, 1],
    ["sparkle", 934, 360, 5, 1.2], ["ticks", 352, 375, 4, 1], ["send", 298, 376, -60, 0.7], ["helmet", 706, 367, 0, 0.8], ["phone", 706, 427, 0, 0.9],
    ["heart", 728, 417, 0, 0.8], ["donut", 912, 433, 0, 0.9], ["cookie", 236, 415, 0, 0.9], ["quotes", 320, 444, 0, 0.9], ["heart", 362, 462, 10, 0.9],
    ["pencil", 280, 485, 34, 0.9], ["pill", 452, 457, -14, 1], ["quote", 547, 457, 0, 0.8], ["send", 590, 467, -60, 0.8], ["pencil", 535, 491, 128, 1],
    ["mic", 387, 515, 4, 1], ["monkey", 470, 548, 0, 1], ["bike", 683, 513, 0, 1], ["star", 200, 512, 5, 0.9], ["star", 290, 527, 10, 1],
    ["thumb", 328, 562, 0, 0.9], ["goblet", 259, 578, -10, 1], ["arrow", 406, 580, 10, 0.8], ["wrench", 562, 548, 0, 0.8], ["wrench", 570, 572, 180, 0.8],
    ["people", 825, 535, 10, 1], ["lemon", 214, 557, 0, 1], ["chat", 242, 630, -12, 1], ["star", 819, 582, 8, 0.9],
    ["star", 45, 627, 8, 0.9], ["compass", 136, 653, 0, 1], ["planet", 47, 675, 0, 1], ["chat", 310, 672, -12, 1], ["quotes", 375, 628, 0, 0.9],
    ["clock", 441, 645, 0, 1], ["star", 495, 618, 0, 1], ["star", 395, 672, 5, 1.2], ["cloud", 533, 660, 0, 1.3], ["map", 607, 622, 0, 1],
    ["bolt", 12, 766, 8, 0.8], ["envelopes", 138, 775, -12, 0.9], ["star", 203, 767, 5, 0.9], ["scooter", 234, 815, 0, 0.95], ["card", 372, 783, -10, 0.9],
    ["drop", 434, 771, 180, 1.6], ["helmet", 442, 815, 0, 1], ["bean", 582, 770, 0, 1], ["sparkle", 145, 832, 8, 1.2], ["sparkle", 155, 895, 10, 0.9],
    ["bluetooth", 126, 877, 5, 0.8], ["glasses", 330, 884, 0, 0.9], ["paw", 424, 906, 0, 0.9], ["magnifier", 450, 917, 0, 1], ["star", 481, 882, 15, 0.9],
    ["recorder", 560, 865, 4, 1], ["star", 608, 832, 20, 0.9], ["heart", 523, 928, -10, 0.9], ["bolt", 82, 917, -20, 0.9], ["cylinder", 222, 914, -16, 1],
    ["lighthouse", 37, 975, 5, 1], ["milk", 133, 960, 0, 1], ["backpack", 240, 972, 0, 1], ["sparkle", 292, 935, 5, 1], ["sparkle", 83, 1000, 5, 1],
    ["suit", 347, 996, 0, 1], ["flower", 453, 1005, 0, 1], ["note", 585, 970, -18, 0.8], ["bread", 140, 1028, 0, 1], ["bolt", 217, 1060, 8, 1],
    ["star", 287, 1054, 10, 0.9], ["fish", 597, 1025, 0, 1], ["gear", 621, 1066, 8, 0.9], ["leaf", 98, 1085, 0, 1], ["rotary", 525, 1070, 0, 0.9],
    ["notes", 248, 1094, 10, 1], ["android", 775, 655, -10, 1], ["bolt", 873, 648, -30, 1], ["bolt", 1008, 630, 8, 1], ["star", 952, 608, 0, 1.4],
    ["guitar", 936, 655, 0, 0.9], ["quotes", 685, 667, 0, 0.9], ["star", 710, 775, 5, 0.9], ["pin", 830, 775, -15, 0.9], ["ticks", 905, 787, 5, 1],
    ["note", 975, 785, -12, 0.9], ["send", 656, 795, 50, 1], ["octopus", 710, 888, 0, 1], ["ball", 834, 827, 0, 1], ["shoe", 893, 857, 0, 1],
    ["avatar", 980, 866, 0, 0.9], ["pin", 865, 920, 12, 1], ["voice", 897, 965, -12, 1], ["sparkle", 988, 985, 8, 1], ["burger", 954, 1040, -4, 0.9],
    ["camera", 775, 1040, -8, 1], ["bell", 876, 1058, 5, 0.9], ["people", 690, 1055, 5, 0.7], ["sparkle", 792, 1078, 35, 1], ["pointer", 1018, 1088, 0, 1],
    ["lotus", 745, 1090, 0, 0.9], ["star", 155, 706, 12, 0.9], ["clip", 106, 722, 0, 0.9], ["star", 650, 1100, 10, 1], ["star", 950, 1097, 8, 1],
    ["popsicle", 840, 1138, -12, 0.85], ["blob", 920, 1162, 0, 1], ["star", 980, 1143, 10, 0.9], ["cupcake", -3, 1172, 0, 0.9], ["drop", 825, 1201, 20, 0.8],
    ["drop", 872, 1200, -20, 0.9], ["drop", 895, 1204, -20, 0.8], ["face", 760, 1215, -14, 0.95], ["cat", 896, 1262, 0, 1], ["star", 1002, 1232, 10, 0.9],
    ["note", 1006, 1277, -4, 1], ["ok", 803, 1333, 5, 0.95], ["gamepad", 880, 1362, 0, 1], ["clover", 702, 1347, 0, 1], ["hi", 668, 1275, 0, 1],
    ["smiley", 577, 1270, -8, 1], ["starfish", 630, 1209, 8, 1], ["pear", 537, 1180, -12, 1], ["plus", 572, 1180, -10, 1], ["lollipop", 670, 1172, 0, 1],
    ["sparkle", 536, 1310, 8, 0.8], ["sparkle", 752, 1277, 12, 1], ["sparkle", 959, 1350, 8, 0.8], ["mic", 1009, 1388, -8, 1], ["radio", 735, 1405, 0, 1],
    ["car", 521, 1405, 0, 1], ["send", 50, 1096, 60, 1], ["magnifier", 95, 1086, 0, 1], ["note", 155, 1119, -20, 1], ["bottle", 95, 1162, -9, 0.9],
    ["star", 219, 1143, 5, 1.3], ["hands", 345, 1118, 0, 0.9], ["dog", 222, 1200, 0, 1], ["star", 315, 1174, 8, 0.9], ["picture", 386, 1201, -14, 0.9],
    ["pencil", 317, 1273, 50, 0.9], ["apple", 375, 1289, 0, 1], ["send", 476, 1270, 10, 1], ["bell", 98, 1307, 18, 0.9], ["drop", 91, 1230, 0, 1.1],
    ["drop", 118, 1240, -15, 1.2], ["drop", 99, 1261, 10, 0.8], ["heart", 155, 1230, 0, 1], ["star", 45, 1279, 8, 1], ["sparkle", 65, 1208, 8, 0.8],
    ["sparkle", 414, 1307, 12, 0.8], ["laptop", 196, 1345, 5, 1], ["dino", 338, 1370, 0, 1], ["map", 463, 1350, -20, 0.9], ["heart", 420, 1392, 0, 1],
    ["star", 93, 1350, 15, 0.9], ["cloud", 50, 1384, 0, 1.3], ["peace", 478, 1180, 0, 1]
];

// text, x, y, turn, size
var words = [
    ["42", 222, 248, -14, 42], ["W", 502, 245, -5, 28], ["24", 876, 320, -12, 56], ["B", 776, 436, 18, 48], ["F", 800, 455, 24, 42], ["F", 820, 474, 24, 42],
    ["文", 48, 826, -8, 56], ["A", 90, 844, -8, 60], ["文", 577, 1371, -8, 56], ["A", 618, 1390, -8, 60], ["Hi", 659, 1288, 0, 40]
];

// x, y, radius
var dots = [
    552,30,3, 558,50,7, 585,50,4, 708,38,7, 732,41,4, 743,57,5, 692,51,4, 582,70,4, 602,73,4, 744,76,6, 895,72,7, 932,62,3, 953,61,3, 948,44,5, 976,46,3, 999,40,6,
    1005,63,4, 916,69,3, 22,66,8, 76,47,3, 98,31,7, 106,55,4, 165,48,7, 185,63,3, 240,35,5, 263,29,4, 234,59,6, 314,37,4, 215,81,4, 152,83,8, 100,80,8, 119,91,5,
    142,106,3, 281,93,5, 303,80,6, 330,87,5, 353,92,4, 380,84,7, 315,109,6, 227,129,3, 247,131,4, 233,143,5, 139,140,4, 272,151,7, 416,80,4, 437,65,5,
    27,185,10, 51,201,6, 67,175,4, 98,175,6, 136,158,6, 164,153,4, 173,164,4, 168,179,5, 183,190,4, 183,203,2, 108,199,4, 122,219,7, 101,227,5, 145,224,3, 174,222,6,
    88,236,3, 12,302,3, 5,209,7, 13,226,4, 242,160,4, 262,164,4, 260,181,5, 243,187,4, 230,196,4, 206,201,6, 267,233,5, 272,255,5, 170,242,4, 308,151,5, 427,180,7,
    449,173,4, 468,169,3, 495,168,3, 462,195,4, 395,214,5, 380,228,4, 398,242,4, 420,242,3, 450,219,3, 545,160,5, 560,190,7, 590,175,4, 610,205,5, 640,165,4, 665,190,6,
    700,170,4, 720,205,7, 750,180,4, 780,200,5, 815,170,4, 840,195,6, 870,165,4, 895,200,4, 930,152,3, 946,155,4, 984,156,5, 967,178,4, 993,181,4, 956,226,7, 977,233,4,
    938,245,4, 953,257,4, 933,268,6, 968,284,4, 27,309,5, 56,301,4, 951,454,3, 1003,458,3, 1015,447,4, 16,435,6, 72,432,4, 77,454,7, 78,475,5, 991,475,5, 91,502,4,
    79,511,5, 99,524,3, 113,518,5, 145,518,7, 134,500,4, 154,534,5, 170,529,3, 142,565,4, 951,560,7, 971,567,4, 973,581,4, 930,574,4, 991,594,5, 14,592,3, 50,590,7,
    252,258,3, 295,262,3, 179,274,5, 290,286,7, 308,279,4, 369,268,4, 454,278,5, 479,275,4, 434,303,7, 382,312,4, 283,318,4, 429,323,4, 197,334,8, 287,338,4, 260,344,5,
    277,355,6, 341,350,4, 205,362,4, 386,387,3, 329,372,5, 380,406,4, 335,414,4, 296,417,8, 363,428,8, 389,437,4, 281,445,5, 501,415,5, 525,419,5, 538,431,4, 515,444,8,
    653,256,5, 727,291,6, 773,274,4, 818,302,4, 794,315,4, 813,321,4, 823,337,5, 726,322,4, 741,325,5, 697,330,9, 602,309,4, 932,268,7, 900,365,6, 903,383,4, 923,388,3,
    897,400,3, 752,388,5, 731,391,5, 807,388,5, 755,402,4, 816,406,4, 665,402,8, 640,429,4, 659,425,3, 671,436,4, 606,443,4, 630,443,6, 750,444,6, 848,435,4, 860,443,5,
    752,460,4, 773,467,7, 858,465,6, 844,475,4, 869,474,4, 627,463,4, 644,468,5, 874,491,5, 789,486,4, 768,495,5, 760,518,5, 600,486,5, 462,483,8, 484,478,7, 420,487,4,
    426,501,4, 442,496,4, 586,503,7, 529,526,4, 242,484,9, 329,475,4, 320,498,7, 347,497,4, 233,515,5, 252,536,5, 214,497,3, 616,571,4, 641,566,4, 669,573,6, 789,575,7,
    865,571,4, 901,572,5, 916,583,5, 775,591,5, 848,590,6, 219,595,6, 235,597,5, 473,603,6, 334,622,6, 317,630,4, 16,610,4, 83,628,4, 103,621,3, 16,643,5, 71,649,4,
    91,654,4, 94,676,3, 180,679,3, 484,657,5, 500,648,3, 523,625,3, 547,623,7, 538,604,4, 75,755,7, 319,755,4, 328,787,6, 329,804,3, 339,820,7, 406,781,3, 503,784,6,
    520,791,4, 507,812,4, 543,806,7, 573,800,4, 588,801,4, 631,790,4, 635,804,3, 8,800,8, 20,817,4, 12,842,5, 31,850,6, 75,859,3, 19,871,4, 41,875,4, 58,874,4, 95,868,7,
    78,886,4, 9,893,6, 35,897,3, 171,859,7, 100,903,3, 186,880,3, 209,874,4, 236,873,4, 267,870,6, 259,854,3, 284,848,4, 266,841,3, 319,843,4, 377,829,3, 396,825,4,
    402,841,5, 415,856,4, 446,858,6, 462,852,3, 485,852,3, 491,825,4, 197,888,3, 380,923,5, 394,937,4, 408,940,4, 413,960,7, 435,951,3, 452,958,5, 405,997,7, 400,974,4,
    498,974,4, 507,988,5, 513,960,7, 490,926,5, 500,908,3, 537,952,4, 552,937,3, 570,930,7, 592,925,3, 524,988,2, 555,999,6, 538,1011,4, 557,1022,5, 407,1020,3, 77,947,6,
    70,970,4, 186,963,4, 60,1014,3, 68,1042,5, 16,1052,4, 25,1062,4, 187,1048,5, 148,1062,3, 164,1065,5, 181,1066,5, 139,1077,5, 193,1087,4, 272,1024,4, 292,1024,6,
    257,1035,4, 241,1039,4, 248,1055,5, 241,1072,3, 273,1075,5, 396,1047,3, 434,1051,7, 454,1050,4, 477,1052,6, 447,1064,3, 432,1076,4, 584,1063,3, 596,1079,4, 641,847,4,
    635,869,6, 642,1034,4, 728,609,5, 816,615,4, 666,621,7, 714,629,7, 682,632,4, 724,648,4, 831,630,7, 846,653,4, 980,633,4, 918,731,4, 933,741,6, 17,705,8, 25,723,4,
    50,721,8, 77,717,4, 94,701,5, 112,690,2, 16,740,5, 803,756,4, 747,772,6, 773,777,7, 793,780,4, 756,788,3, 664,764,3, 861,762,3, 940,802,4, 872,821,4, 761,820,4,
    818,858,6, 921,874,3, 888,896,4, 913,892,4, 932,898,5, 946,910,4, 913,915,7, 978,943,3, 973,956,4, 820,994,5, 832,1012,7, 853,1009,3, 903,1001,4, 899,1015,6,
    846,1029,4, 821,1031,4, 824,1047,4, 825,1068,5, 841,1080,3, 1005,1004,5, 1006,1020,4, 1011,1053,7, 978,1081,4, 605,1104,7, 621,1101,4, 681,1099,4, 691,1106,5,
    806,1111,5, 799,1126,3, 793,1155,6, 873,1097,6, 894,1098,8, 918,1092,5, 983,1098,7, 919,1108,3, 903,1118,4, 881,1120,2, 970,1117,4, 968,1175,5, 954,1181,3, 953,1200,4,
    974,1198,8, 980,1216,4, 969,1236,4, 982,1248,4, 599,1183,6, 586,1206,4, 602,1222,5, 698,1209,5, 670,1220,5, 684,1230,4, 705,1229,6, 827,1221,4, 774,1261,4, 790,1262,5,
    725,1287,4, 733,1305,5, 748,1323,8, 747,1356,3, 737,1378,6, 791,1389,5, 667,1329,4, 665,1347,4, 642,1348,4, 650,1366,7, 621,1325,4, 616,1302,7, 545,1355,4, 530,1286,4,
    523,1261,7, 518,1275,4, 570,1395,4, 609,1407,6, 633,1403,4, 695,1388,4, 967,1304,4, 971,1320,5, 985,1316,4, 999,1313,4, 1013,1323,6, 988,1341,5, 930,1331,7, 910,1336,5,
    959,1382,3, 955,1401,5, 970,1406,3, 57,1137,3, 61,1173,4, 119,1139,5, 128,1167,4, 152,1171,5, 150,1190,7, 128,1210,5, 163,1204,5, 29,1237,7, 75,1250,4, 77,1273,6,
    158,1258,6, 194,1157,4, 213,1104,4, 249,1128,5, 257,1142,4, 209,1172,5, 198,1183,4, 314,1205,6, 308,1226,7, 295,1240,4, 324,1235,4, 296,1256,4, 335,1293,5, 450,1138,4,
    440,1148,4, 451,1156,3, 449,1239,5, 441,1261,7, 423,1269,5, 434,1290,3, 403,1336,3, 416,1344,4, 415,1358,5, 448,1412,7, 18,1314,7, 42,1315,3, 8,1336,3, 36,1341,5,
    61,1332,6, 16,1355,5, 85,1397,4, 110,1411,5
];

var markup = "";

doodles.forEach(function(d) {
    markup += '<path d="' + shapes[d[0]] + '" vector-effect="non-scaling-stroke" transform="translate(' + d[1] + " " + d[2] + ") rotate(" + d[3] + ") scale(" + d[4] + ')"/>';
});

words.forEach(function(w) {
    markup += '<text font-size="' + w[4] + '" transform="translate(' + w[1] + " " + w[2] + ") rotate(" + w[3] + ')">' + w[0] + "</text>";
});

for (var i = 0; i < dots.length; i += 3) {
    markup += '<circle cx="' + dots[i] + '" cy="' + dots[i + 1] + '" r="' + dots[i + 2] + '"/>';
}

document.getElementById("doodles").innerHTML = markup;
```
